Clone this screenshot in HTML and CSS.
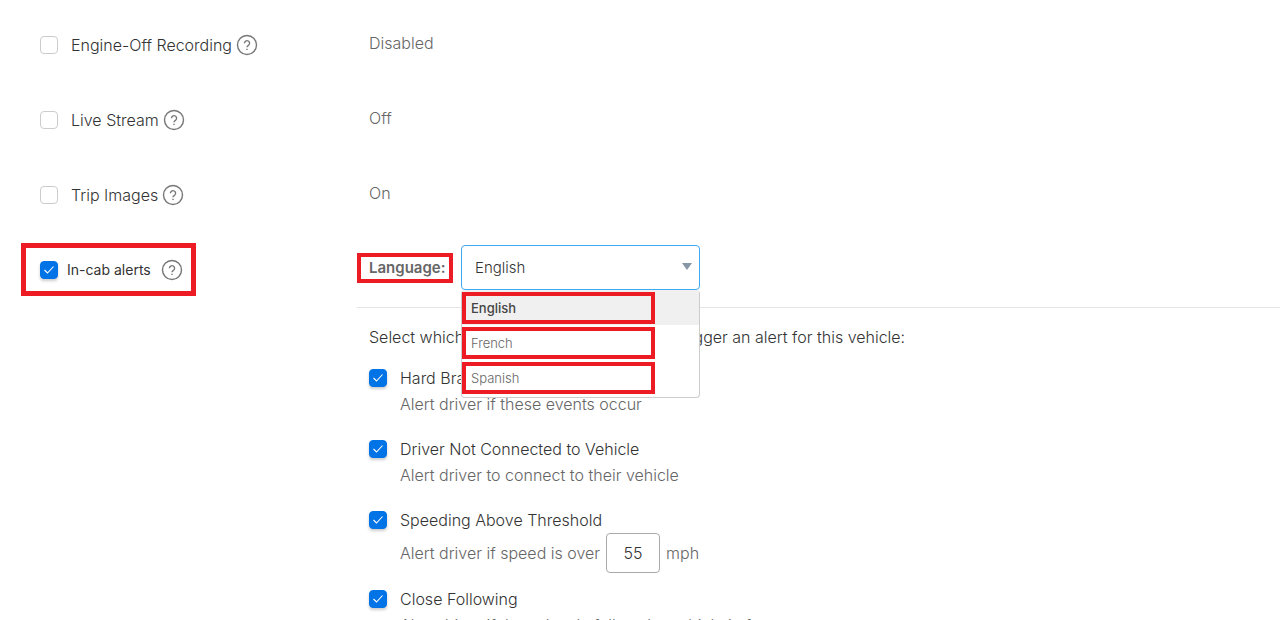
FILE: index.html
```html
<!DOCTYPE html>
<html lang="en">
<head>
  <meta charset="UTF-8">
  <title>Vehicle settings</title>
  <link rel="stylesheet" href="styles.css">
</head>
<body>

  <form class="settings">
    <div class="setting">
      <input type="checkbox" class="check" id="engine-off">
      <label for="engine-off">Engine-Off Recording</label>
      <button type="button" class="help" aria-label="Help">
        <svg viewBox="0 0 22 22"><circle cx="11" cy="11" r="9.5"/><path d="M8.4 9.2a2.6 2.5 0 1 1 4 2.1c-.9.6-1.4 1-1.4 2M11 14.8v1.2"/></svg>
      </button>
    </div>
    <div class="value">Disabled</div>

    <div class="setting">
      <input type="checkbox" class="check" id="live-stream">
      <label for="live-stream">Live Stream</label>
      <button type="button" class="help" aria-label="Help">
        <svg viewBox="0 0 22 22"><circle cx="11" cy="11" r="9.5"/><path d="M8.4 9.2a2.6 2.5 0 1 1 4 2.1c-.9.6-1.4 1-1.4 2M11 14.8v1.2"/></svg>
      </button>
    </div>
    <div class="value">Off</div>

    <div class="setting">
      <input type="checkbox" class="check" id="trip-images">
      <label for="trip-images">Trip Images</label>
      <button type="button" class="help" aria-label="Help">
        <svg viewBox="0 0 22 22"><circle cx="11" cy="11" r="9.5"/><path d="M8.4 9.2a2.6 2.5 0 1 1 4 2.1c-.9.6-1.4 1-1.4 2M11 14.8v1.2"/></svg>
      </button>
    </div>
    <div class="value">On</div>

    <div class="setting marked">
      <input type="checkbox" class="check" id="in-cab" checked>
      <label for="in-cab">In-cab alerts</label>
      <button type="button" class="help" aria-label="Help">
        <svg viewBox="0 0 22 22"><circle cx="11" cy="11" r="9.5"/><path d="M8.4 9.2a2.6 2.5 0 1 1 4 2.1c-.9.6-1.4 1-1.4 2M11 14.8v1.2"/></svg>
      </button>
    </div>

    <div class="alerts">
      <div class="language">
        <label class="language-label" for="language">Language:</label>
        <div class="dropdown">
          <select class="language-select" id="language">
            <option>English</option>
            <option>French</option>
            <option>Spanish</option>
          </select>
          <svg class="arrow" viewBox="0 0 10 7"><path d="M0 0h10L5 7z"/></svg>
          <ul class="menu">
            <li class="menu-item selected"><span class="mark">English</span></li>
            <li class="menu-item"><span class="mark">French</span></li>
            <li class="menu-item"><span class="mark">Spanish</span></li>
          </ul>
        </div>
      </div>

      <div class="events">
        <p class="intro">Select which in-cab safety events should trigger an alert for this vehicle:</p>

        <div class="event">
          <input type="checkbox" class="check" id="hard-brake" checked>
          <label class="event-name" for="hard-brake">Hard Brake</label>
          <p class="event-text">Alert driver if these events occur</p>
        </div>

        <div class="event">
          <input type="checkbox" class="check" id="not-connected" checked>
          <label class="event-name" for="not-connected">Driver Not Connected to Vehicle</label>
          <p class="event-text">Alert driver to connect to their vehicle</p>
        </div>

        <div class="event speeding">
          <input type="checkbox" class="check" id="speeding" checked>
          <label class="event-name" for="speeding">Speeding Above Threshold</label>
          <div class="event-text speed">
            <label for="speed">Alert driver if speed is over</label>
            <input type="text" class="speed-input" id="speed" value="55">
            <span>mph</span>
          </div>
        </div>

        <div class="event">
          <input type="checkbox" class="check" id="following" checked>
          <label class="event-name" for="following">Close Following</label>
          <p class="event-text">Alert driver if they closely follow the vehicle in front</p>
        </div>
      </div>
    </div>
  </form>

</body>
</html>
```

FILE: styles.css
```css
body{
  margin: 0;
  background-color: white;
  color: #333;
  font-family: Inter, sans-serif;
  font-size: 16px;
  font-weight: 300;
}
p, ul{
  margin: 0;
  padding: 0;
}
input, select, button{
  font: inherit;
  color: inherit;
}
.settings{
  display: grid;
  grid-template-columns: 357px 1fr;
  grid-template-rows: 75px 75px 60px auto;
  align-items: start;
  padding-top: 33px;
}
.setting{
  display: flex;
  align-items: center;
  height: 24px;
  padding-left: 40px;
}
.setting label{
  margin-left: 13px;
  margin-right: 4px;
}
.value{
  padding-left: 12px;
  line-height: 20px;
  color: #666;
}

/* checkboxes */
.check{
  appearance: none;
  flex: none;
  width: 18px;
  height: 18px;
  margin: 0;
  border: 1px solid #ccc;
  border-radius: 4px;
  background-color: white;
}
.check:checked{
  border-color: #0073e6;
  background: #0073e6 url("data:image/svg+xml,%3Csvg xmlns='http://www.w3.org/2000/svg' viewBox='0 0 16 16'%3E%3Cpath d='M3.5 8l3 3 6-6.5' fill='none' stroke='white' stroke-width='1.1'/%3E%3C/svg%3E") center no-repeat;
  box-shadow: 0 2px 3px rgba(0, 0, 0, 0.2);
}
.help{
  width: 22px;
  height: 22px;
  padding: 0;
  border: none;
  background: none;
  cursor: pointer;
}
.help svg{
  display: block;
  fill: none;
  stroke: #777;
  stroke-width: 1.4;
}

/* red frames */
.marked{
  box-sizing: border-box;
  width: 175px;
  height: 53px;
  margin-left: 21px;
  padding-left: 14px;
  border: 5px solid #ed1c24;
  font-size: 14px;
  font-weight: 400;
}
.marked label{
  margin-left: 9px;
  margin-right: 10px;
}
.language-label{
  box-sizing: border-box;
  width: 96px;
  height: 30px;
  padding-left: 8px;
  border: 4px solid #ed1c24;
  font-size: 15px;
  font-weight: 600;
  line-height: 21px;
  color: #666;
}
.mark{
  box-sizing: border-box;
  display: block;
  width: 193px;
  height: 32px;
  padding-left: 5px;
  border: 4px solid #ed1c24;
  line-height: 24px;
}

/* language */
.language{
  display: flex;
  align-items: center;
  gap: 8px;
  padding-top: 2px;
  padding-bottom: 17px;
  border-bottom: 1px solid #e5e5e5;
}
.dropdown{
  position: relative;
  width: 239px;
}
.language-select{
  appearance: none;
  display: block;
  width: 100%;
  height: 45px;
  padding: 0 13px;
  border: 1px solid #3fa9f5;
  border-radius: 4px;
  background-color: white;
  font-size: 15px;
}
.arrow{
  position: absolute;
  top: 18px;
  right: 8px;
  width: 10px;
  height: 7px;
  fill: #8797a5;
}
.menu{
  position: absolute;
  top: 45px;
  left: 0;
  right: 0;
  padding-bottom: 2px;
  border: 1px solid #ccc;
  border-top: none;
  border-radius: 4px;
  background-color: white;
  list-style: none;
  font-size: 13px;
  color: #666;
}
.menu-item{
  height: 33px;
  padding-top: 2px;
}
.selected{
  background-color: #f0f0f0;
  font-weight: 500;
  color: #444;
}

/* events */
.events{
  padding-left: 12px;
}
.intro{
  margin-top: 16px;
  margin-bottom: 15px;
  line-height: 26px;
}
.event{
  display: grid;
  grid-template-columns: 18px 1fr;
  column-gap: 13px;
  align-items: center;
  margin-bottom: 19px;
  line-height: 26px;
}
.event-name{
  justify-self: start;
}
.event-text{
  grid-column: 2;
  color: #666;
}
.speeding{
  margin-bottom: 13px;
}
.speed{
  display: flex;
  align-items: center;
  gap: 6px;
}
.speed-input{
  box-sizing: border-box;
  width: 54px;
  height: 40px;
  border: 1px solid #aaa;
  border-radius: 4px;
  text-align: center;
  color: #333;
}
```
